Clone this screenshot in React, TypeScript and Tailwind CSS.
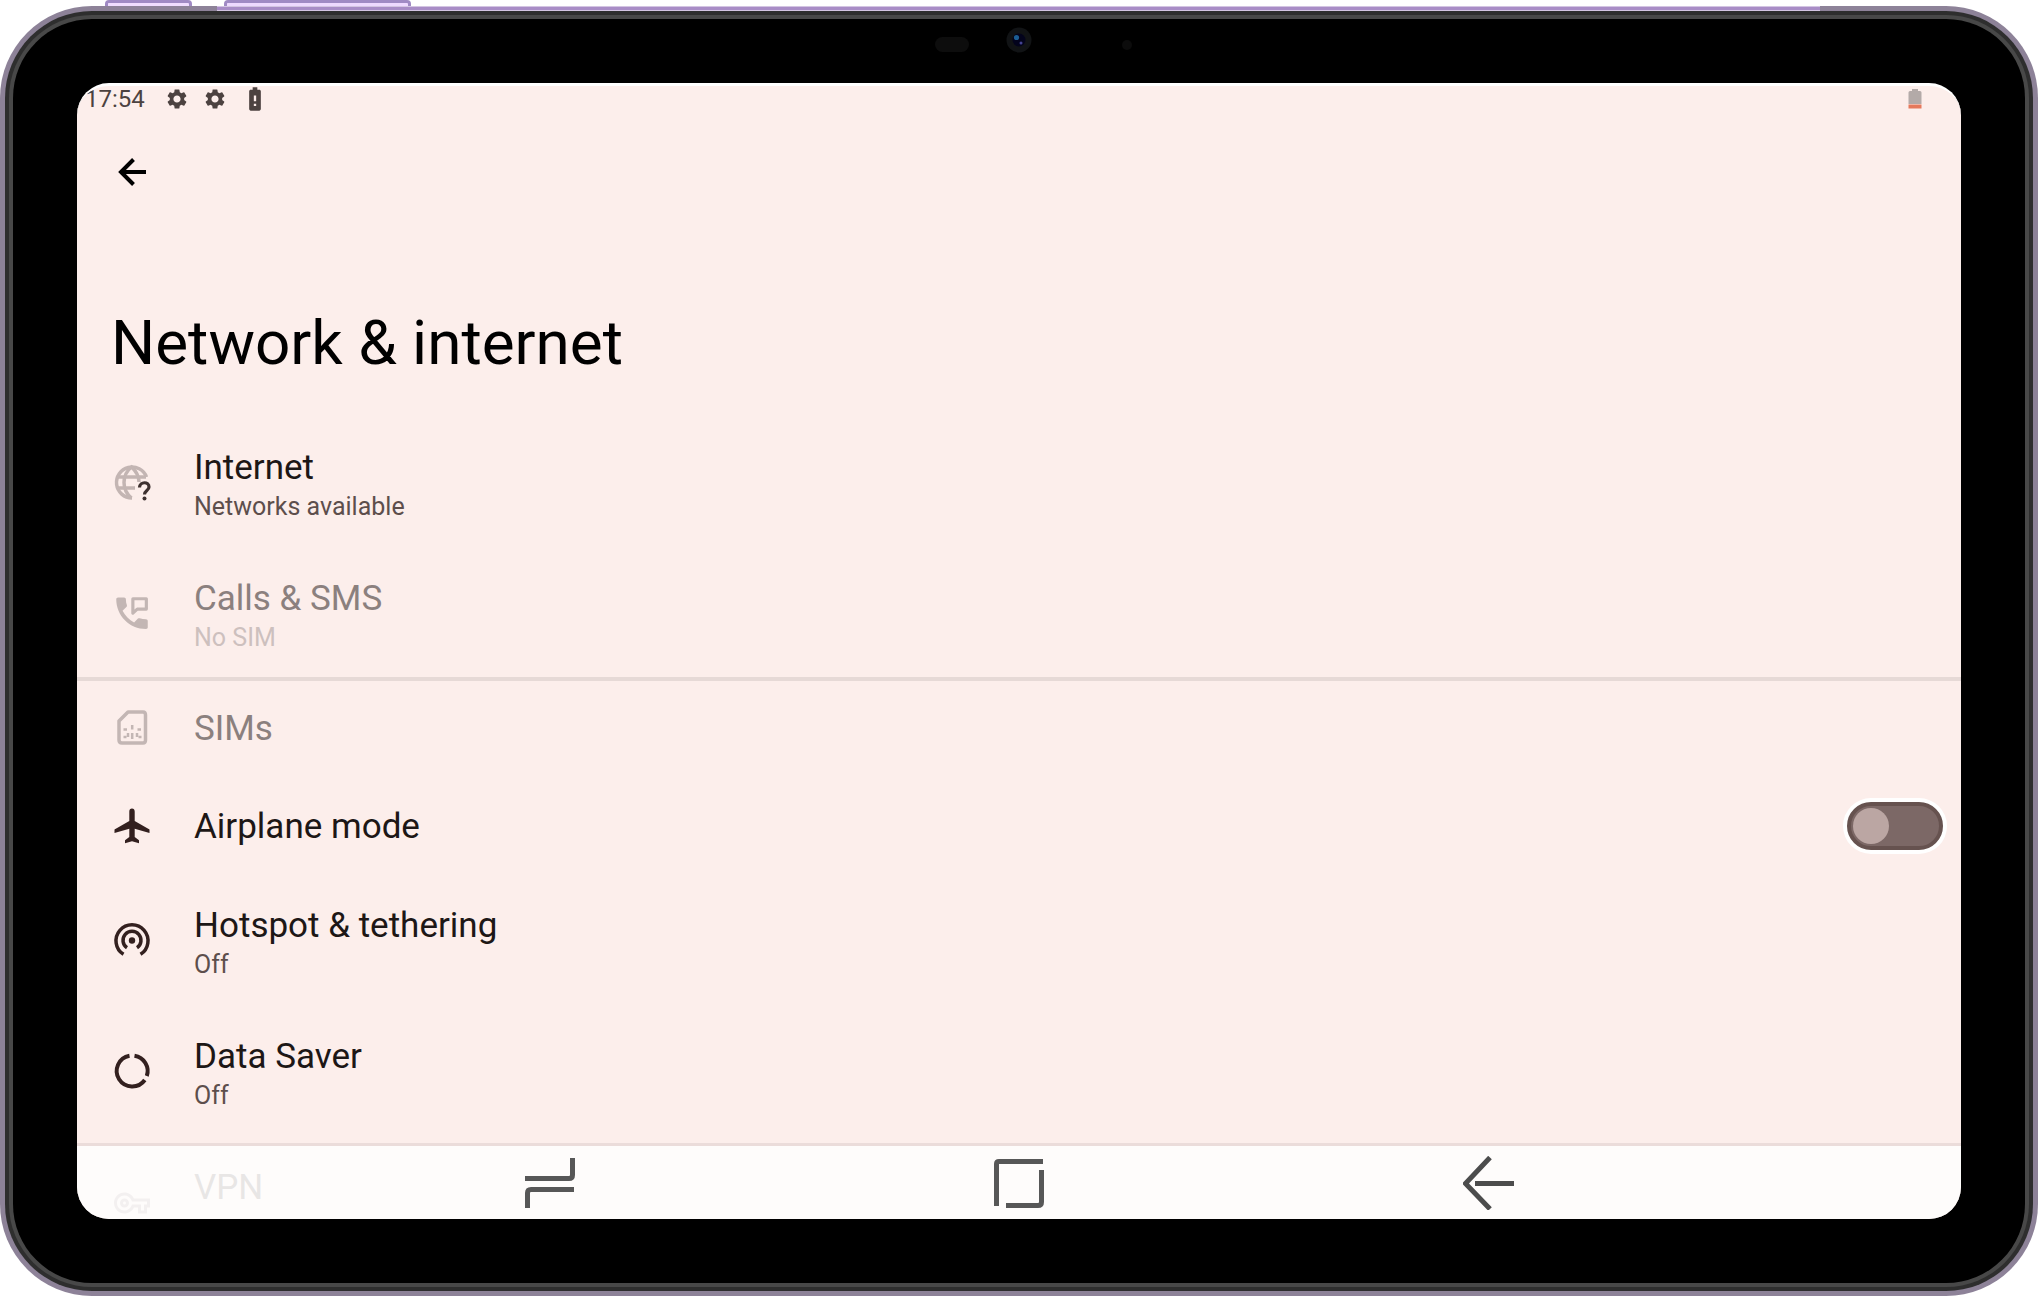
import { useState } from "react";
import type { ReactNode } from "react";
import { MdBatteryAlert, MdOutlineVpnKey, MdSettings } from "react-icons/md";

function ArrowBackIcon() {
  return (
    <svg viewBox="0 0 42 42" className="size-[42px]" fill="none" stroke="currentColor" strokeWidth="4">
      <path d="M22.500 8.500L10 21L22.500 33.500M10.500 21H35" />
    </svg>
  );
}

function GlobeQuestionIcon() {
  return (
    <svg viewBox="0 0 42 42" className="size-[42px]" fill="none">
      <g stroke="#c3b5b3" strokeWidth="3.500">
        <path d="M35.500 15A15.500 15.500 0 1 0 21 36" />
        <path d="M20.500 36C10.500 28 10.500 13 20.500 5C26 10 28 15 28 20" />
        <path d="M6 15H35M6 26H24" />
      </g>
      <path d="M28.500 25.500C29 19 38 19.500 38 25C38 28.500 33.500 28.500 33.500 32.500" stroke="#3d302f" strokeWidth="3.200" />
      <circle cx="33.500" cy="36.500" r="2" fill="#3d302f" />
    </svg>
  );
}

function PhoneMessageIcon() {
  return (
    <svg viewBox="0 0 24 24" className="size-[42px]" fill="none">
      <path
        d="M20 15c-1.200 0-2.500-.2-3.600-.6-.3-.1-.7 0-1 .2l-2.200 2.200c-2.800-1.400-5.100-3.800-6.600-6.600l2.200-2.200c.3-.2.4-.6.300-1C8.700 5.900 8.500 4.700 8.500 3.500c0-.6-.5-1-1-1H4c-.5 0-1 .4-1 1 0 9.400 7.600 17 17 17 .6 0 1-.4 1-1v-3.500c0-.5-.4-1-1-1z"
        fill="currentColor"
      />
      <path d="M12.500 3.300H20.200V9.200H15L12.500 11.500Z" stroke="currentColor" strokeWidth="1.800" strokeLinejoin="round" />
    </svg>
  );
}

function SimIcon() {
  return (
    <svg viewBox="0 0 42 42" className="size-[42px]" fill="none" stroke="currentColor">
      <path d="M17 5H32Q34.500 5 34.500 8V33Q34.500 36 32 36H11Q8 36 8 33V14Z" strokeWidth="3.500" strokeLinejoin="round" />
      <path d="M12.500 22.500H16M12.500 30H15.500M26.500 22.500H30M27.500 30H30.500M21.200 18V22.500M21.200 26V32M17 26V30M26 26V30" strokeWidth="2.500" />
    </svg>
  );
}

function PlaneIcon() {
  return (
    <svg viewBox="0 0 42 42" className="size-[42px]" fill="currentColor">
      <path d="M21 3.500C19.300 3.500 18.300 4.800 18.300 6.500V16L3.500 24.500V28L18.300 23.700V32L14 35.300V38.300L21 36.300L28 38.300V35.300L23.700 32V23.700L38.500 28V24.500L23.700 16V6.500C23.700 4.800 22.700 3.500 21 3.500Z" />
    </svg>
  );
}

function HotspotIcon() {
  return (
    <svg viewBox="0 0 42 42" className="size-[42px]" fill="none" stroke="currentColor" strokeWidth="3.500">
      <path d="M12.500 34.300A16 16 0 1 1 29.500 34.300" />
      <path d="M16 27.800A9 9 0 1 1 26 27.800" />
      <circle cx="21" cy="20.500" r="3.200" fill="currentColor" stroke="none" />
    </svg>
  );
}

function DataSaverIcon() {
  return (
    <svg viewBox="0 0 42 42" className="size-[42px]" fill="none" stroke="currentColor" strokeWidth="4">
      <path d="M23.500 4.700A15.500 15.500 0 0 1 35.800 25M33.800 29A15.500 15.500 0 1 1 18.500 4.700" />
    </svg>
  );
}

function LowBatteryIcon() {
  return (
    <svg viewBox="0 0 14 22" className="h-[22px] w-3.5">
      <path d="M4 1H10V3H12Q13.500 3 13.500 4.500V16H.5V4.500Q.5 3 2 3H4Z" fill="#b3aaa8" />
      <path d="M.5 16.500H13.500V20.500H.5Z" fill="#e5795c" />
    </svg>
  );
}

function FrontCamera() {
  return (
    <svg viewBox="0 0 240 30" className="h-[30px] w-60" aria-hidden="true">
      <rect x="36" y="12" width="34" height="15" rx="7.500" fill="#0d0d0d" />
      <circle cx="120" cy="15" r="12.500" fill="#111315" />
      <circle cx="120" cy="15" r="6.500" fill="#03031c" />
      <circle cx="117.500" cy="12.500" r="2.600" fill="#1b5d92" />
      <circle cx="122" cy="18" r="1.500" fill="#444391" />
      <circle cx="228" cy="20" r="5" fill="#0c0c0c" />
    </svg>
  );
}

type SettingRowProps = {
  icon: ReactNode;
  title: string;
  subtitle?: string;
  tall?: boolean;
  disabled?: boolean;
};

function SettingRow({ icon, title, subtitle, tall, disabled }: SettingRowProps) {
  const isTall = Boolean(subtitle) || tall;

  return (
    <li>
      <button
        type="button"
        disabled={disabled}
        className={`flex w-full items-center gap-[41px] pl-[34px] text-left ${isTall ? "h-[131px]" : "h-[98px]"}`}
      >
        <span className={`flex w-[42px] shrink-0 justify-center ${disabled ? "text-[#c3b6b4]" : "text-[#33201f]"}`}>{icon}</span>
        <span className={isTall ? "h-[72px]" : "pt-0.5"}>
          <span className={`block text-[35px] leading-[42px] ${disabled ? "text-[#8b807e]" : "text-[#1d1716]"}`}>{title}</span>
          {subtitle && (
            <span className={`block text-[25px] leading-9 ${disabled ? "text-[#cdc0be]" : "text-[#5d4e4c]"}`}>{subtitle}</span>
          )}
        </span>
      </button>
    </li>
  );
}

function AirplaneRow() {
  const [enabled, setEnabled] = useState(false);

  return (
    <li>
      <label className="flex h-[98px] items-center gap-[41px] pr-[18px] pl-[34px]">
        <span className="shrink-0 text-[#33201f]">
          <PlaneIcon />
        </span>
        <span className="flex-1 pt-0.5 text-[35px] leading-[42px] text-[#1d1716]">Airplane mode</span>
        <input
          type="checkbox"
          role="switch"
          checked={enabled}
          onChange={(event) => setEnabled(event.target.checked)}
          className="h-12 w-24 appearance-none rounded-full border-4 border-[#66524f] bg-[#7c6866] p-0.5 ring-4 ring-white before:block before:size-9 before:rounded-full before:bg-[#bba6a3] checked:before:ml-auto"
        />
      </label>
    </li>
  );
}

function NavBar() {
  return (
    <nav className="absolute inset-x-0 bottom-0 grid h-[76px] grid-cols-3 items-center border-t-[3px] border-[#ebdcda] bg-[#ffffff]/80 px-[12.5%]">
      <button type="button" aria-label="Recent apps" className="mx-auto">
        <svg viewBox="0 0 54 54" className="size-[54px]" fill="none" stroke="#575757" strokeWidth="5">
          <path d="M4 22.500H48Q51.500 22.500 51.500 19V2M53 33.500H10Q6.500 33.500 6.500 37V52" />
        </svg>
      </button>
      <button type="button" aria-label="Home" className="mx-auto">
        <svg viewBox="0 0 54 54" className="size-[54px]" fill="none" stroke="#575757" strokeWidth="5">
          <path d="M4.500 50V8Q4.500 5.500 7 5.500H51M49.500 14V46Q49.500 49.500 46 49.500H14" />
        </svg>
      </button>
      <button type="button" aria-label="Back" className="mx-auto">
        <svg viewBox="0 0 54 54" className="size-[54px]" fill="none" stroke="#4c4c4c" strokeWidth="5">
          <path d="M27 1.500L2.500 27.500L27 53M12 27.500H51" />
        </svg>
      </button>
    </nav>
  );
}

export default function App() {
  return (
    <div className="relative flex h-screen flex-col bg-white pt-1.5 font-['Roboto',sans-serif]">
      {/* side keys */}
      <div className="absolute inset-x-0 top-0 flex h-2 gap-8 pl-[105px]">
        <div className="w-[87px] rounded-t border-3 border-b-0 border-[#a08ac4] bg-[#f0ddff]" />
        <div className="w-[187px] rounded-t border-3 border-b-0 border-[#a08ac4] bg-[#eed9ff]" />
      </div>

      <div className="relative flex min-h-0 flex-1 rounded-[92px] bg-[#8d8298] p-[5px]">
        <div className="absolute top-0 right-[218px] left-[217px] h-[5px] border-y border-[#d3c4e2] bg-[#a88cc6]" />
        <div className="flex min-h-0 flex-1 rounded-[87px] bg-[#2e2e2e] p-1">
          <div className="flex min-h-0 flex-1 rounded-[83px] bg-[#484848] p-1">
            <div className="flex min-h-0 flex-1 flex-col rounded-[79px] bg-black px-16 pb-16">
              <div className="flex h-16 shrink-0 justify-center pt-1.5">
                <FrontCamera />
              </div>

              <main className="relative min-h-0 flex-1 overflow-hidden rounded-[32px] border-t-3 border-white bg-[#fceeeb]">
                <div className="flex h-[26px] items-center justify-between pr-[39px] pl-2 text-[#4c4240]">
                  <div className="flex items-center gap-3.5">
                    <time className="w-[66px] text-[24px] leading-6">17:54</time>
                    <MdSettings className="size-6" />
                    <MdSettings className="size-6" />
                    <MdBatteryAlert className="size-7" />
                  </div>
                  <LowBatteryIcon />
                </div>

                <button type="button" aria-label="Navigate up" className="mt-[39px] ml-[34px] block text-black">
                  <ArrowBackIcon />
                </button>

                <h1 className="mt-[113px] ml-[34px] text-[62px] leading-[74px] text-black">Network &amp; internet</h1>

                <ul className="mt-[37px]">
                  <SettingRow icon={<GlobeQuestionIcon />} title="Internet" subtitle="Networks available" />
                  <SettingRow icon={<PhoneMessageIcon />} title="Calls & SMS" subtitle="No SIM" disabled />
                  <li aria-hidden="true" className="-my-0.5 h-1 bg-[#e6d9d6]" />
                  <SettingRow icon={<SimIcon />} title="SIMs" disabled />
                  <AirplaneRow />
                  <SettingRow icon={<HotspotIcon />} title="Hotspot & tethering" subtitle="Off" />
                  <SettingRow icon={<DataSaverIcon />} title="Data Saver" subtitle="Off" />
                  <SettingRow icon={<MdOutlineVpnKey className="size-9" />} title="VPN" tall disabled />
                </ul>

                <NavBar />
              </main>
            </div>
          </div>
        </div>
      </div>
    </div>
  );
}
